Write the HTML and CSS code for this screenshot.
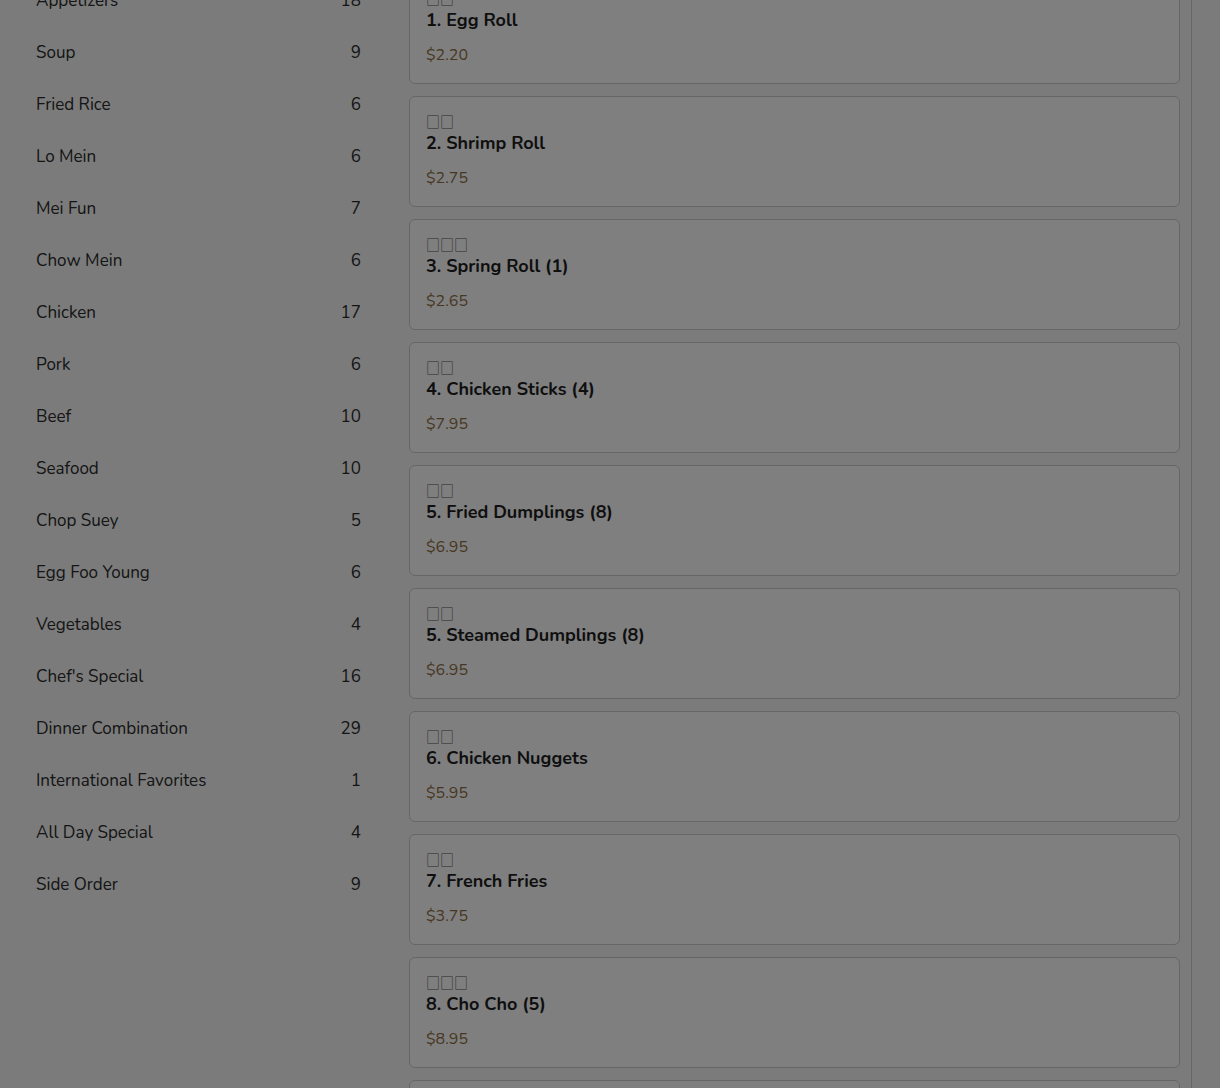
FILE: index.html
```html
<!DOCTYPE html>
<html lang="en">
<head>
<meta charset="utf-8">
<title>Menu</title>
<link rel="stylesheet" href="styles.css">
</head>
<body>
<div class="page">
  <nav class="sidebar">
    <ul class="cats">
      <li class="cat"><span>Appetizers</span><span>18</span></li>
      <li class="cat"><span>Soup</span><span>9</span></li>
      <li class="cat"><span>Fried Rice</span><span>6</span></li>
      <li class="cat"><span>Lo Mein</span><span>6</span></li>
      <li class="cat"><span>Mei Fun</span><span>7</span></li>
      <li class="cat"><span>Chow Mein</span><span>6</span></li>
      <li class="cat"><span>Chicken</span><span>17</span></li>
      <li class="cat"><span>Pork</span><span>6</span></li>
      <li class="cat"><span>Beef</span><span>10</span></li>
      <li class="cat"><span>Seafood</span><span>10</span></li>
      <li class="cat"><span>Chop Suey</span><span>5</span></li>
      <li class="cat"><span>Egg Foo Young</span><span>6</span></li>
      <li class="cat"><span>Vegetables</span><span>4</span></li>
      <li class="cat"><span>Chef's Special</span><span>16</span></li>
      <li class="cat"><span>Dinner Combination</span><span>29</span></li>
      <li class="cat"><span>International Favorites</span><span>1</span></li>
      <li class="cat"><span>All Day Special</span><span>4</span></li>
      <li class="cat"><span>Side Order</span><span>9</span></li>
    </ul>
  </nav>
  <main class="main">
    <div class="card"><div class="cn">□□</div><div class="name">1. Egg Roll</div><div class="price">$2.20</div></div>
    <div class="card"><div class="cn">□□</div><div class="name">2. Shrimp Roll</div><div class="price">$2.75</div></div>
    <div class="card"><div class="cn">□□□</div><div class="name">3. Spring Roll (1)</div><div class="price">$2.65</div></div>
    <div class="card"><div class="cn">□□</div><div class="name">4. Chicken Sticks (4)</div><div class="price">$7.95</div></div>
    <div class="card"><div class="cn">□□</div><div class="name">5. Fried Dumplings (8)</div><div class="price">$6.95</div></div>
    <div class="card"><div class="cn">□□</div><div class="name">5. Steamed Dumplings (8)</div><div class="price">$6.95</div></div>
    <div class="card"><div class="cn">□□</div><div class="name">6. Chicken Nuggets</div><div class="price">$5.95</div></div>
    <div class="card"><div class="cn">□□</div><div class="name">7. French Fries</div><div class="price">$3.75</div></div>
    <div class="card"><div class="cn">□□□</div><div class="name">8. Cho Cho (5)</div><div class="price">$8.95</div></div>
    <div class="card"><div class="cn">□□</div><div class="name">9. Fried Wonton</div><div class="price">$4.95</div></div>
  </main>
</div>
<div class="backdrop"></div>
</body>
</html>
```
FILE: styles.css
```css
html, body {
  margin: 0;
  padding: 0;
  background: #f6f6f6;
  font-family: "Nunito", "Noto Sans", "DejaVu Sans", sans-serif;
  overflow: hidden;
}

.page {
  display: flex;
  align-items: flex-start;
  margin-top: -27px;
}

.sidebar {
  width: 377px;
  flex: none;
  box-sizing: border-box;
  padding: 1px 16px 0 36px;
}

.cats {
  list-style: none;
  margin: 0;
  padding: 0;
}

.cat {
  display: flex;
  justify-content: space-between;
  align-items: center;
  height: 52px;
  font-size: 17px;
  color: #2a2a2a;
}

.main {
  flex: none;
  width: 815px;
  box-sizing: border-box;
  padding: 0 11px 0 32px;
  border-right: 1px solid #cfcfcf;
  display: flex;
  flex-direction: column;
  gap: 12px;
  min-height: 1200px;
}

.card {
  box-sizing: border-box;
  width: 771px;
  height: 111px;
  background: #fff;
  border: 1px solid #cccccc;
  border-radius: 6px;
  padding: 16px 16px 0 16px;
  display: flex;
  flex-direction: column;
}

.cn {
  font-family: "Noto Sans CJK SC", "DejaVu Sans", sans-serif;
  font-size: 14px;
  line-height: 17px;
  height: 17px;
  color: #555;
  transform: scale(1, 1.15);
  transform-origin: left center;
}

.name {
  font-size: 18px;
  line-height: 26px;
  font-weight: 700;
  color: #1e1e1e;
}

.price {
  margin-top: 12px;
  font-size: 16px;
  line-height: 20px;
  color: #8f6f45;
}

.backdrop {
  position: fixed;
  inset: 0;
  background: rgba(0, 0, 0, 0.5);
}
```
